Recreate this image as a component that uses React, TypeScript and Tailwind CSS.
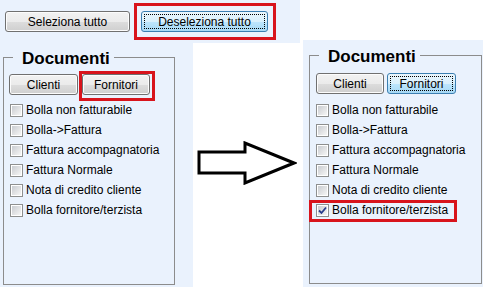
import React from "react";

const FONT = "font-['Liberation_Sans',Arial,sans-serif]";

function Btn({ label, w, focused }: { label: string; w: string; focused?: boolean }) {
  if (focused) {
    return (
      <div
        className={`${w} h-[21px] rounded-[3px] border border-[#3c7fb1] bg-[linear-gradient(to_bottom,#eaf6fd_0%,#d9f0fc_50%,#bee6fd_51%,#a7d9f5_100%)] p-[2px] flex`}
      >
        <div className="flex-1 border border-dotted border-black flex items-center justify-center text-[12px] leading-none text-black">
          {label}
        </div>
      </div>
    );
  }
  return (
    <div
      className={`${w} h-[21px] rounded-[3px] border border-[#707070] bg-[linear-gradient(to_bottom,#f2f2f2_0%,#ebebeb_50%,#dddddd_51%,#cfcfcf_100%)] shadow-[inset_0_0_0_1px_#fcfcfc] flex items-center justify-center text-[12px] leading-none text-black`}
    >
      {label}
    </div>
  );
}

function Checkbox({ checked }: { checked?: boolean }) {
  return (
    <span className="relative w-[13px] h-[13px] border border-[#8e8f8f] bg-white p-[1px] flex shrink-0">
      <span className="flex-1 bg-[linear-gradient(135deg,#c9ccd1_0%,#e2e3e5_55%,#f6f6f6_100%)]" />
      {checked && (
        <svg className="absolute left-[1px] top-[1px]" width="9" height="9" viewBox="0 0 9 9">
          <path d="M1 4.5 L3.5 7 L8 1.5" fill="none" stroke="#283c8c" strokeWidth="1.8" />
        </svg>
      )}
    </span>
  );
}

const items = [
  "Bolla non fatturabile",
  "Bolla->Fattura",
  "Fattura accompagnatoria",
  "Fattura Normale",
  "Nota di credito cliente",
  "Bolla fornitore/terzista",
];

function Group({ right }: { right?: boolean }) {
  return (
    <div
      className={
        right
          ? "relative ml-[6px] mt-[15px] w-[173px] h-[229px] border border-[#8c8c8c] px-[6px] pt-[17px]"
          : "relative ml-[3px] mt-[14px] w-[172px] h-[228px] border border-[#8c8c8c] px-[5px] pt-[16px]"
      }
    >
      <div className="absolute -top-[9px] left-[9px] pl-[9px] pr-[4px] bg-[#eaf2fd] text-[17px] leading-[20px] font-bold text-black">
        Documenti
      </div>
      <div className={right ? "flex gap-[3px]" : "flex gap-[4px]"}>
        <Btn label="Clienti" w={right ? "w-[68px]" : "w-[69px]"} />
        <div className="relative">
          <Btn label="Fornitori" w={right ? "w-[69px]" : "w-[68px]"} focused={right} />
          {!right && (
            <div className="absolute -left-[3px] -top-[3px] -right-[5px] -bottom-[6px] border-[3px] border-[#d8141c]" />
          )}
        </div>
      </div>
      <div className={right ? "mt-[6px] flex flex-col" : "mt-[5px] flex flex-col pl-[1px]"}>
        {items.map((t, i) => (
          <div key={t} className="relative h-[20px] flex items-center gap-[3px] text-[12px] text-black">
            <Checkbox checked={right && i === 5} />
            <span className="leading-none">{t}</span>
            {right && i === 5 && (
              <div className="absolute -left-[7px] top-[0px] w-[148px] h-[22px] border-[3px] border-[#d8141c]" />
            )}
          </div>
        ))}
      </div>
    </div>
  );
}

export default function App() {
  return (
    <div className={`${FONT} w-[486px] h-[287px] bg-white flex overflow-hidden`}>
      <div className="w-[300px] flex flex-col">
        <div className="h-[43px] bg-[#eaf2fd] flex items-center pl-[5px] gap-[4px]">
          <Btn label="Seleziona tutto" w="w-[125px]" />
          <div className="border-[3px] border-[#d8141c] pl-[4px] pr-[5px] py-[5px]">
            <Btn label="Deseleziona tutto" w="w-[127px]" focused />
          </div>
        </div>
        <div className="flex flex-1">
          <div className="w-[193px] h-[244px] bg-[#eaf2fd] pt-0">
            <Group />
          </div>
          <div className="flex-1 flex justify-center pt-[98px]">
            <svg width="100" height="44" viewBox="0 0 100 44">
              <polygon
                points="2,11 48,11 48,2 97,22 48,42 48,32 2,32"
                fill="white"
                stroke="black"
                strokeWidth="3"
                strokeLinejoin="miter"
              />
            </svg>
          </div>
        </div>
      </div>
      <div className="ml-[3px] mt-[40px] w-[180px] h-[247px] bg-[#eaf2fd]">
        <Group right />
      </div>
    </div>
  );
}
